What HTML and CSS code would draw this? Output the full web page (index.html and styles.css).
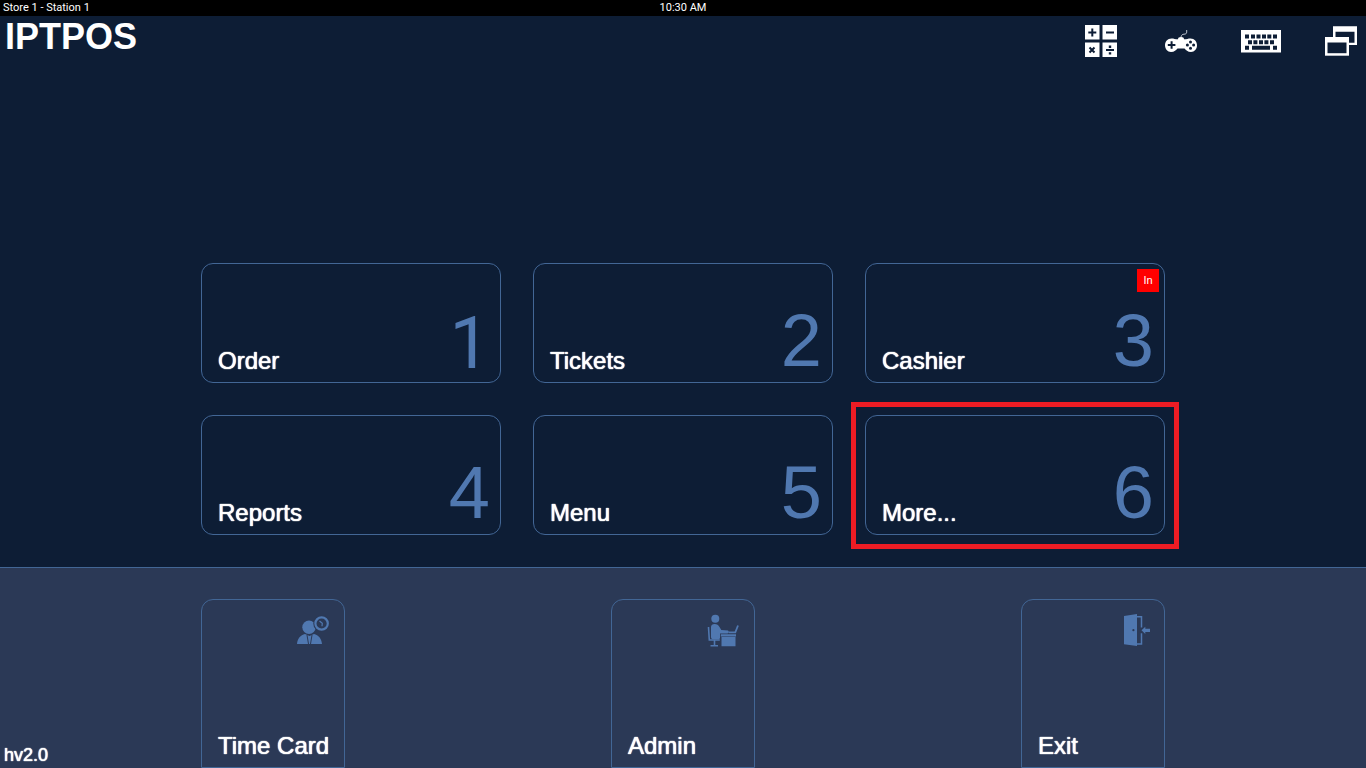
FILE: index.html
```html
<!DOCTYPE html>
<html lang="en">
<head>
    <meta charset="UTF-8">
    <meta name="viewport" content="width=device-width, initial-scale=1.0">
    <title>IPTPOS</title>
    <link rel="stylesheet" href="styles.css">
</head>
<body>
    <div class="status-bar">
        <span>Store 1 - Station 1</span>
        <span>10:30 AM</span>
    </div>

    <header class="header">
        <h1>IPTPOS</h1>
        <div class="tools">
            <button class="tool" aria-label="Calculator">
                <svg viewBox="0 0 40 40" width="40" height="40">
                    <path fill="#fff" d="M4 4h14.500v14.500H4zM21.500 4H36v14.500H21.500zM4 21.500h14.500V36H4zM21.500 21.500H36V36H21.500z"/>
                    <path class="cut" d="M7.300 11.500h8M11.300 7.500v8M25 11.500h8M8.500 26.500l5 5M13.500 26.500l-5 5M25 29h8"/>
                    <path class="cut-fill" d="M27.800 24.500h2.400v2.400h-2.400zM27.800 31.200h2.400v2.400h-2.400z"/>
                </svg>
            </button>
            <button class="tool" aria-label="Games">
                <svg viewBox="0 0 40 40" width="40" height="40">
                    <path fill="#fff" d="M10.500 17.500c2.500 0 3.500.8 6.500.8 0-1.600 1-2.300 3-2.300s3 .7 3 2.300c3 0 4-.8 6.500-.8 4 0 6.500 3 6.500 6.800S33.500 31 30 31c-3.500 0-5-2-6.500-3.500h-7C15 29 13.500 31 10 31c-3.500 0-6-3-6-6.700s2.500-6.800 6.500-6.800z"/>
                    <path fill="none" stroke="#b9c0cb" stroke-width="1" d="M20 16c.3-2 1.500-2.800 3-2.800 2 0 2.700-.8 2.700-2.200V9"/>
                    <path class="cut" d="M6.800 24h7.600M10.600 20.200v7.600"/>
                    <g class="cut-fill">
                        <circle cx="29.500" cy="21" r="1.500"/>
                        <circle cx="29.500" cy="27.200" r="1.500"/>
                        <circle cx="26.400" cy="24.100" r="1.500"/>
                        <circle cx="32.600" cy="24.100" r="1.500"/>
                    </g>
                </svg>
            </button>
            <button class="tool" aria-label="Keyboard">
                <svg viewBox="0 0 40 40" width="40" height="40">
                    <path fill="#fff" d="M0 9h40v22.500H0z"/>
                    <path class="cut-fill" d="M4 13.500h4v4H4zM10 13.500h4v4h-4zM15.500 13.500h4v4h-4zM21 13.500h4v4h-4zM26.300 13.500h4v4h-4zM32 13.500h4v4h-4zM7 19.300h4v4H7zM12.400 19.300h4v4h-4zM18 19.300h4v4h-4zM23.400 19.300h4v4h-4zM29 19.300h4v4h-4zM4 24.700h4v4H4zM11 24.700h18v4H11zM32 24.700h4v4h-4z"/>
                </svg>
            </button>
            <button class="tool" aria-label="Windows">
                <svg viewBox="0 0 40 40" width="40" height="40">
                    <path fill="#fff" fill-rule="evenodd" d="M12 5.300h24V24H12zM14.500 10.800v11h19v-11z"/>
                    <path fill="#fff" d="M4 16h24v18.700H4z"/>
                    <path class="cut-fill" d="M6.500 21.500h19v10.700h-19z"/>
                </svg>
            </button>
        </div>
    </header>

    <main class="main">
        <div class="tiles">
            <button class="tile"><span class="label">Order</span><span class="number plain">1</span></button>
            <button class="tile"><span class="label">Tickets</span><span class="number">2</span></button>
            <button class="tile"><span class="label">Cashier</span><span class="number">3</span><span class="badge">In</span></button>
            <button class="tile"><span class="label">Reports</span><span class="number">4</span></button>
            <button class="tile"><span class="label">Menu</span><span class="number">5</span></button>
            <button class="tile highlight"><span class="label">More...</span><span class="number">6</span></button>
        </div>
    </main>

    <footer class="footer">
        <span class="version">hv2.0</span>
        <div class="actions">
            <button class="action">
                <svg viewBox="0 0 32 32" width="32" height="32">
                    <path d="M0 30c.5-5.500 3.500-9 8-10l4.500 2 4.500-2c4.500 1 7.500 4.500 8 10z"/>
                    <circle cx="12" cy="13.300" r="6.700"/>
                    <path class="gap" d="M10 21l1.500 9M15 21l-1.500 9" stroke-width="1"/>
                    <circle class="gap-fill" cx="24.600" cy="9.500" r="8.300"/>
                    <circle class="line" cx="24.600" cy="9.500" r="6.200" stroke-width="2.200"/>
                    <path class="line" d="M22.500 7l2.800 2.200-.3 3" stroke-width="1.200"/>
                </svg>
                <span class="label">Time Card</span>
            </button>
            <button class="action">
                <svg viewBox="0 0 32 32" width="32" height="32">
                    <circle cx="8.300" cy="4.800" r="4"/>
                    <path d="M7.500 10c2.500 0 4 1 5 3l1.800 3 6.700.5c1.200.8 1 2.500-.5 3h-7.500v4.800l-1 1H6c-1.500 0-2-1-2-2.500V13c0-2 1.500-3 3.500-3z"/>
                    <path class="line" d="M1.500 13l.8 13h10.500M7.500 26v5.500M3.500 31.800h7.500" stroke-width="1.600"/>
                    <path class="line" d="M21.500 18.400h6.800L31 11.500" stroke-width="1.800"/>
                    <path d="M13.800 20.200H29v2.300H13.800zM14.500 23h14v9.200h-14z"/>
                </svg>
                <span class="label">Admin</span>
            </button>
            <button class="action">
                <svg viewBox="0 0 32 32" width="32" height="32">
                    <path d="M7 2l13-2v32L7 30.300z"/>
                    <circle class="gap-fill" cx="16.400" cy="16.200" r="1.100"/>
                    <path class="line" d="M20 2.700h4.500v10.800M24.500 19.200V30H20" stroke-width="1.500"/>
                    <path d="M24.500 16.300l3.800-3.500v1.900H33v3.300h-4.700v1.900z"/>
                </svg>
                <span class="label">Exit</span>
            </button>
        </div>
    </footer>
</body>
</html>
```
FILE: styles.css
```css
* {
    box-sizing: border-box;
}
body {
    font-family: "Liberation Sans", Arial, sans-serif;
    background-color: #0d1d35;
    color: white;
    margin: 0;
    display: flex;
    flex-direction: column;
    min-height: 100vh;
}
button {
    font-family: inherit;
    color: white;
    background: none;
    border: none;
    padding: 0;
    cursor: pointer;
}
.status-bar {
    display: grid;
    grid-template-columns: 1fr auto 1fr;
    padding: 0 3px;
    background-color: black;
    font-family: Roboto, Arial, sans-serif;
    font-size: 11px;
    line-height: 16px;
}
.header {
    display: flex;
    justify-content: space-between;
    align-items: flex-start;
    padding: 1px 5px 0;
}
h1 {
    margin: 0;
    font-size: 36px;
    line-height: 40px;
}
.tools {
    display: flex;
    gap: 40px;
    padding-top: 4px;
}
.tool svg, .action svg {
    display: block;
}
.cut {
    fill: none;
    stroke: #0d1d35;
    stroke-width: 2;
}
.cut-fill {
    fill: #0d1d35;
}

/* numbered tiles */
.main {
    flex: 1;
    display: flex;
    justify-content: center;
    align-items: flex-end;
    padding: 32px 16px;
}
.tiles {
    flex: 1;
    max-width: 964px;
    display: grid;
    grid-template-columns: repeat(3, 1fr);
    gap: 32px;
}
.tile {
    position: relative;
    display: flex;
    justify-content: space-between;
    align-items: flex-end;
    height: 120px;
    padding: 0 10px 9px 16px;
    border: 1px solid #426695;
    border-radius: 12px;
}
.label, .version {
    text-shadow: 0 0 1px white, 0 0 1px white;
}
.label {
    font-size: 24px;
    line-height: 24px;
}
.number {
    font-size: 74px;
    line-height: 64px;
    color: #5078b0;
}
.number.plain {
    font-family: Roboto, Arial, sans-serif;
    font-size: 72px;
    line-height: 58px;
}
.badge {
    position: absolute;
    top: 5px;
    right: 5px;
    width: 22px;
    background-color: red;
    font-size: 11px;
    line-height: 23px;
}
.highlight::after {
    content: "";
    position: absolute;
    inset: -14px -15px -15px;
    border: 5px solid #ed1c24;
}

/* bottom bar */
.footer {
    display: grid;
    grid-template-columns: 1fr minmax(0, 964px) 1fr;
    padding-top: 31px;
    background-color: #2b3956;
    border-top: 1px solid #426695;
}
.version {
    align-self: end;
    padding: 0 0 3px 4px;
    font-size: 18px;
    line-height: 20px;
}
.actions {
    display: flex;
    justify-content: space-between;
}
.action {
    display: flex;
    flex-direction: column;
    justify-content: space-between;
    align-items: flex-start;
    width: 144px;
    height: 169px;
    padding: 14px 15px 9px 16px;
    border: 1px solid #426695;
    border-radius: 12px 12px 0 0;
    white-space: nowrap;
}
.action svg {
    align-self: flex-end;
    overflow: visible;
    fill: #5078b0;
}
.action .line {
    fill: none;
    stroke: #5078b0;
}
.action .gap {
    fill: none;
    stroke: #2b3956;
}
.action .gap-fill {
    fill: #2b3956;
}

@media (max-width: 800px) {
    .tiles {
        grid-template-columns: 1fr;
    }
    .actions {
        gap: 10px;
    }
}
```
